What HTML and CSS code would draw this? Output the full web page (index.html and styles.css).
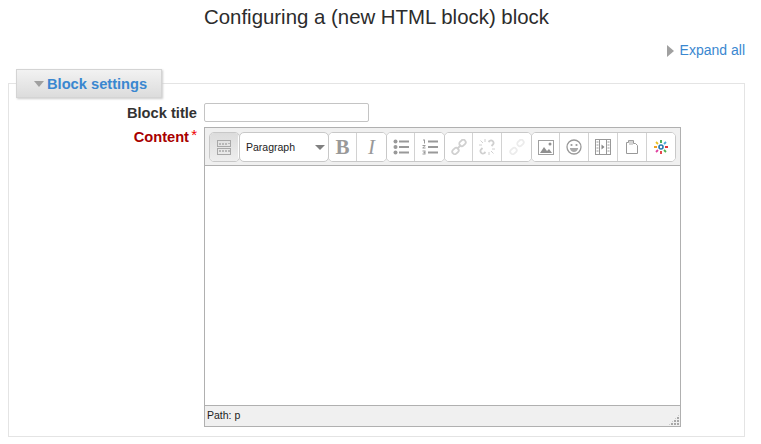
FILE: index.html
```html
<!DOCTYPE html>
<html lang="en">
<head>
<meta charset="utf-8">
<title>Configuring a block</title>
<link rel="stylesheet" href="styles.css">
</head>
<body>
<h2 class="title">Configuring a (new HTML block) block</h2>
<div class="collapse-row"><a class="expand" href="#"><span class="tri-right"></span>Expand all</a></div>
<fieldset class="settings">
  <legend class="legend"><span class="tri-down"></span><a href="#">Block settings</a></legend>
  <div class="row row-title">
    <label class="label">Block title</label>
    <input class="text-input" type="text">
  </div>
  <div class="row">
    <label class="label label-req">Content<span class="star">*</span></label>
    <div class="editor">
      <div class="toolbar">
        <div class="group first"><button class="btn pressed"><svg width="16" height="15" viewBox="0 0 16 15"><g fill="none" stroke="#a8a8a8"><rect x="1.500" y="0.500" width="13" height="6"/><rect x="1.500" y="8.500" width="13" height="6"/></g><path d="M3 3h2v2H3zM6 3h2v2H6zM9 3h2v2H9zM12 3h2v1h-2zM3 10h2v2H3zM6 10h2v2H6zM9 10h2v2H9zM12 10h2v2h-2z" fill="#b8b8b8"/></svg></button></div>
        <div class="group select"><span>Paragraph</span><i class="tri-sel"></i></div>
        <div class="group">
          <button class="btn glyph-b">B</button>
          <button class="btn glyph-i">I</button>
        </div>
        <div class="group">
          <button class="btn"><svg width="16" height="16" viewBox="0 0 16 16"><g fill="#999"><circle cx="2.500" cy="2.500" r="2"/><circle cx="2.500" cy="8" r="2"/><circle cx="2.500" cy="13.500" r="2"/><path d="M6 1.500h10v2H6zM6 7h10v2H6zM6 12.500h10v2H6z"/></g></svg></button>
          <button class="btn"><svg width="16" height="16" viewBox="0 0 16 16"><g fill="#999"><path d="M1 0.500h2v4H2v-3H1zM0.500 6h3v1l-2 1.500h2v1h-3v-1l2-1.500h-2zM0.500 11.500h3v4h-3v-1h2v-.5h-1v-1h1v-.5h-2z"/><path d="M6 1.500h10v2H6zM6 7h10v2H6zM6 12.500h10v2H6z"/></g></svg></button>
        </div>
        <div class="group">
          <button class="btn"><svg width="16" height="16" viewBox="0 0 16 16"><g fill="none" stroke="#d0d0d0" stroke-width="1.800"><rect x="8" y="1.500" width="7" height="5" rx="2.500" transform="rotate(-45 11.500 4)"/><rect x="1" y="9.500" width="7" height="5" rx="2.500" transform="rotate(-45 4.500 12)"/><path d="M6 10l4-4"/></g></svg></button>
          <button class="btn"><svg width="16" height="16" viewBox="0 0 16 16"><g fill="none" stroke="#d0d0d0" stroke-width="1.800"><path d="M9.500 3l1-1a2.500 2.500 0 0 1 3.500 3.500l-1.500 1.500M6.500 13l-1 1A2.500 2.500 0 0 1 2 10.500L3.500 9"/><path stroke-width="1" d="M1.500 1.500l2.500 2.500M14.500 14.500L12 12M6 0v3M10 13v3M0 6h3M13 10h3"/></g></svg></button>
          <button class="btn"><svg width="16" height="16" viewBox="0 0 16 16"><g fill="none" stroke="#ececec" stroke-width="1.800"><rect x="8" y="1.500" width="7" height="5" rx="2.500" transform="rotate(-45 11.500 4)"/><rect x="1" y="9.500" width="7" height="5" rx="2.500" transform="rotate(-45 4.500 12)"/></g></svg></button>
        </div>
        <div class="group">
          <button class="btn"><svg width="16" height="15" viewBox="0 0 16 15"><rect x="0.500" y="0.500" width="15" height="14" fill="#fff" stroke="#a0a0a0"/><path d="M2 13l4-6 3 4 2-2 3 4z" fill="#909090"/><circle cx="12" cy="4" r="1.500" fill="#909090"/></svg></button>
          <button class="btn"><svg width="16" height="16" viewBox="0 0 16 16"><circle cx="8" cy="8" r="7" fill="#fff" stroke="#999" stroke-width="1.300"/><circle cx="5.500" cy="6" r="1.100" fill="#999"/><circle cx="10.500" cy="6" r="1.100" fill="#999"/><path d="M3.800 9h8.400c-.5 2.500-2.200 4-4.200 4s-3.700-1.500-4.200-4z" fill="#aaa"/></svg></button>
          <button class="btn"><svg width="16" height="16" viewBox="0 0 16 16"><rect x="0.500" y="0.500" width="15" height="15" fill="#fff" stroke="#999"/><path d="M4.500 .5v15M11.500 .5v15" stroke="#999"/><path d="M1.500 3h2M1.500 6h2M1.500 9h2M1.500 12h2M12.500 3h2M12.500 6h2M12.500 9h2M12.500 12h2" stroke="#999"/><path d="M6.500 5.500l3 2.500-3 2.500z" fill="#888"/></svg></button>
          <button class="btn"><svg width="14" height="16" viewBox="0 0 14 16"><path d="M1.500 3.500h2v-2h5v3h2l2 2v8h-11z" fill="#fff" stroke="#999"/><path d="M5 1v5M7 1v5" stroke="#aaa"/></svg></button>
          <button class="btn last"><svg width="16" height="16" viewBox="0 0 16 16"><g stroke-width="1.800"><path d="M8 1v3" stroke="#3ba64a"/><path d="M8 12v3" stroke="#e2363c"/><path d="M1 8h3" stroke="#f0a020"/><path d="M12 8h3" stroke="#e2363c"/><path d="M3 3l2 2" stroke="#e8c020"/><path d="M13 3l-2 2" stroke="#4aa8d8"/><path d="M3 13l2-2" stroke="#e040a0"/><path d="M13 13l-2-2" stroke="#50b050"/></g><circle cx="8" cy="8" r="2.800" fill="#2a7ab0"/><circle cx="8" cy="8" r="1.200" fill="#fff"/></svg></button>
        </div>
      </div>
      <textarea class="body" aria-label="Content"></textarea>
      <div class="status">Path: p<span class="grip"></span></div>
    </div>
  </div>
</fieldset>
</body>
</html>
```
FILE: styles.css
```css
* { box-sizing: border-box; }
html, body { margin: 0; padding: 0; background: #fff; }
body { width: 761px; height: 444px; overflow: hidden; font-family: "Liberation Sans", Arial, sans-serif; color: #333; }
a { color: #3a87d0; text-decoration: none; }

.title { margin: 0; padding: 7px 8px 0 0; height: 41px; font-size: 20.400px; line-height: 21px; font-weight: 400; text-align: center; color: #2c2c2c; }

.collapse-row { display: flex; justify-content: flex-end; padding-right: 16px; height: 28px; }
.expand { display: flex; align-items: center; font-size: 14px; line-height: 19px; height: 19px; }
.tri-right { width: 0; height: 0; margin-right: 6px; border-style: solid; border-width: 6px 0 6px 7px; border-color: transparent transparent transparent #a0a0a0; }

.settings { margin: 0 16px 0 8px; padding: 0 0 9px 0; width: 737px; height: 368px; border: 1px solid #e4e4e4; border-radius: 0; }
.legend { display: flex; align-items: center; margin-left: 7px; padding: 0 0 0 17px; width: 146px; height: 29px; background: linear-gradient(#f2f2f2, #dcdcdc); border: 1px solid #d4d4d4; box-shadow: 1px 1px 2px #ccc; font-size: 14.660px; font-weight: 700; }
.tri-down { width: 0; height: 0; margin-right: 3px; border-style: solid; border-width: 6px 5.500px 0 5.500px; border-color: #a0a0a0 transparent transparent transparent; }

.row { display: flex; align-items: flex-start; }
.row-title { height: 29px; padding-top: 5px; }
.label { width: 188px; padding-right: 0; margin: 1px 7px 0 0; text-align: right; font-size: 14.660px; line-height: 18px; font-weight: 700; color: #333; }
.label-req { color: #a80000; }
.star { display: inline-block; width: 8px; color: #e00; font-size: 15px; font-weight: 400; text-align: right; position: relative; top: -2px; }
.text-input { width: 165px; height: 19px; margin: 0; border: 1px solid #c4c4c4; border-radius: 2px; background: #fff; }

.editor { display: flex; flex-direction: column; width: 477px; height: 300px; border: 1px solid #b0b0b0; background: #f0f0ee; }
.toolbar { display: flex; height: 38px; padding: 4px 4px 0 4px; flex: none; border-bottom: 1px solid #b0b0b0; background: #f0f0f0; }
.group { display: flex; height: 30px; background: #fff; border: 1px solid #c8c8c8; border-radius: 5px; margin-right: -1px; overflow: hidden; }
.btn { display: flex; align-items: center; justify-content: center; width: 29px; height: 100%; padding: 0; margin: 0; background: #fff; border: 0; border-right: 1px solid #d2d2d2; font-family: "Liberation Serif", serif; color: #999; }
.btn:last-child { border-right: 0; }
.group .btn:first-child { width: 28px; }
.group .btn.last { width: 28px; }
.group.first { width: 31px; }
.group .pressed { width: 29px; background: linear-gradient(#dcdcdc, #eeeeee); }
.glyph-b { font-size: 21px; font-weight: 700; }
.glyph-i { font-size: 21px; font-style: italic; }
.select { width: 90px; align-items: center; justify-content: space-between; padding: 0 3px 0 6px; font-family: "Liberation Sans", Arial, sans-serif; font-size: 10.500px; color: #222; }
.tri-sel { width: 0; height: 0; border-style: solid; border-width: 5px 5.500px 0 5.500px; border-color: #808080 transparent transparent transparent; }

.body { display: block; flex: 1; width: 100%; min-height: 0; margin: 0; padding: 0; border: 0; outline: 0; resize: none; background: #fff; }
.status { position: relative; flex: none; height: 21px; padding-left: 2px; border-top: 1px solid #b0b0b0; background: #f0f0f0; font-size: 10.500px; line-height: 18px; color: #222; }
.grip { position: absolute; right: 0; bottom: 0; width: 12px; height: 12px; background: radial-gradient(circle at 1px 1px, #a8a8a8 1px, transparent 1px) 0 0 / 3px 3px; clip-path: polygon(100% 0, 100% 100%, 0 100%); }
```
